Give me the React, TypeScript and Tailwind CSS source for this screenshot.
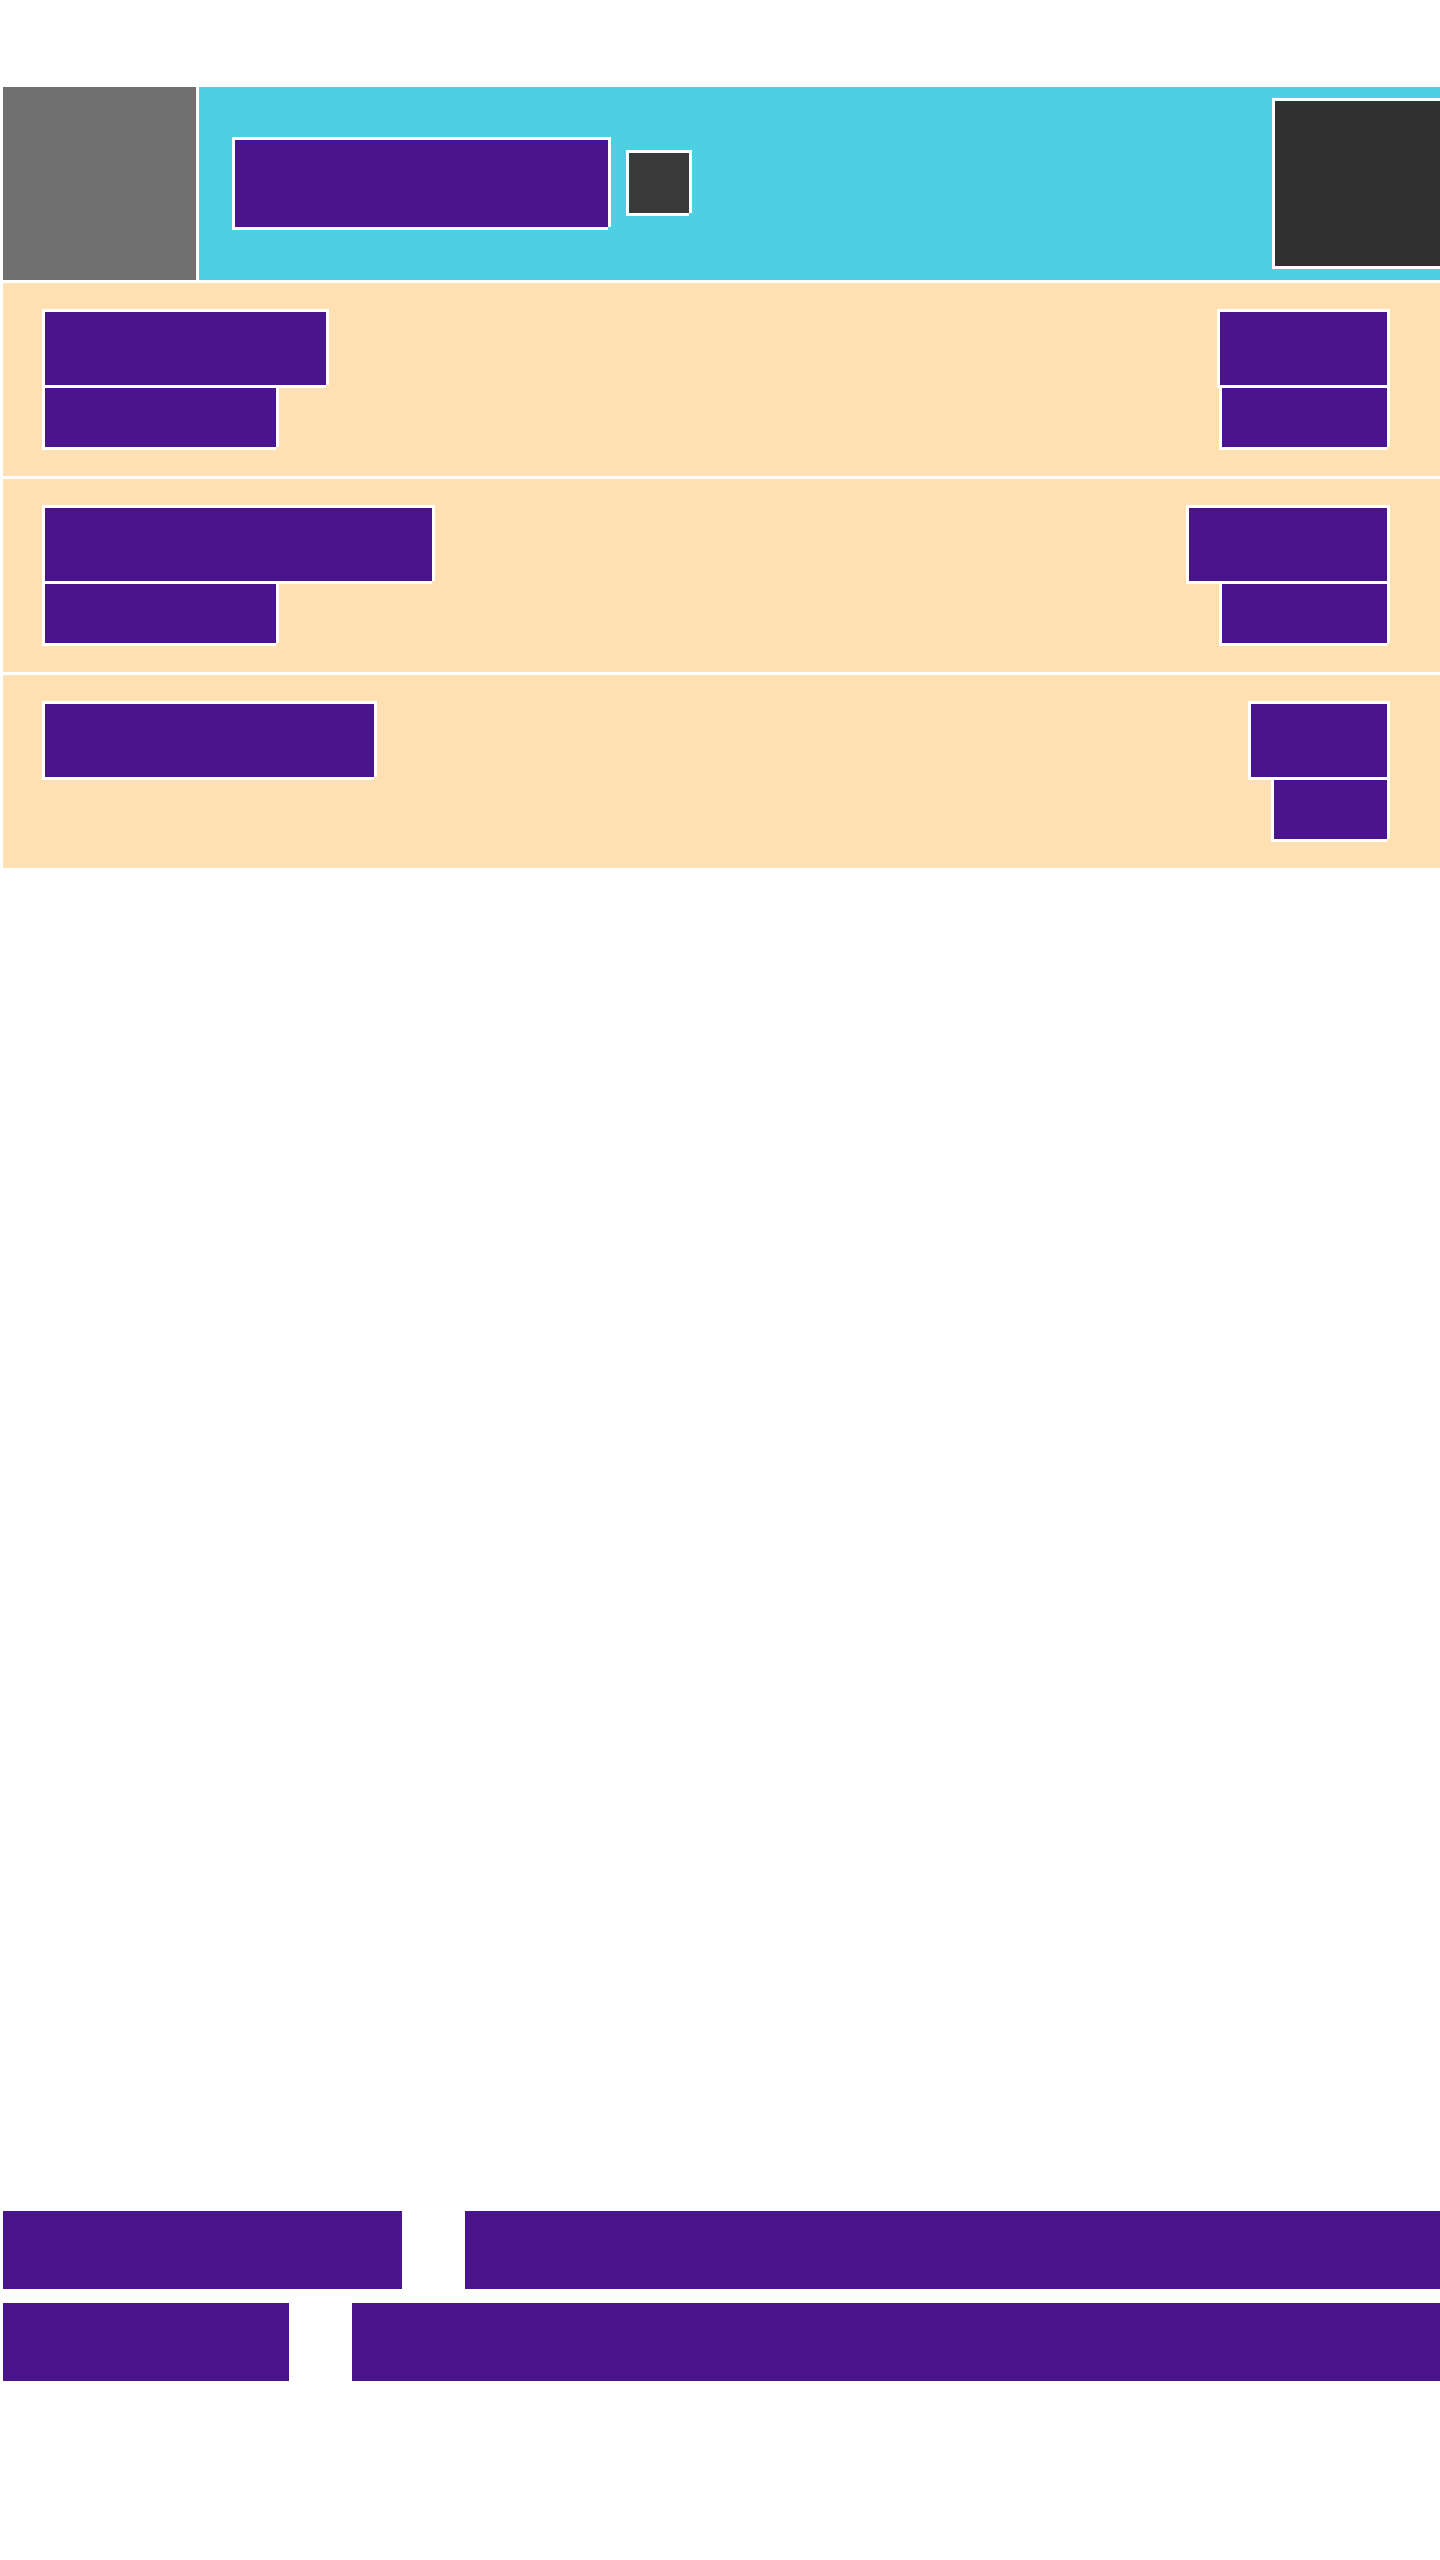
const outline = "shadow-[-3px_-3px_0_#fff,3px_-3px_0_#fff,-3px_3px_0_#fff,3px_0_0_#fff,0_3px_0_#fff]";

function Bar({ w, h, dark }: { w: string; h: string; dark?: string }) {
  return <div className={`${w} ${h} ${dark ?? "bg-[#4a148c]"} ${outline}`} />;
}

const rows = [
  { l1: "w-[281px]", l2: "w-[231px]", r1: "w-[167px]", r2: "w-[165px]" },
  { l1: "w-[387px]", l2: "w-[231px]", r1: "w-[198px]", r2: "w-[165px]" },
  { l1: "w-[329px]", l2: "", r1: "w-[136px]", r2: "w-[113px]" },
];

export default function App() {
  return (
    <div className="w-[1440px] h-[2560px] overflow-hidden bg-white pt-[87px] pl-[3px]">
      <header className="flex h-[193px] gap-[3px]">
        <div className="w-[193px] bg-[#707070]" />
        <div className="flex flex-1 items-center overflow-hidden bg-[#4dd0e1] pl-[36px]">
          <Bar w="w-[373px]" h="h-[87px]" />
          <div className="ml-[21px] mb-px">
            <Bar w="w-[60px]" h="h-[60px]" dark="bg-[#3a3a3a]" />
          </div>
          <div className="ml-auto">
            <Bar w="w-[165px]" h="h-[165px]" dark="bg-[#313131]" />
          </div>
        </div>
      </header>

      <div className="mt-[3px] flex flex-col gap-[3px]">
        {rows.map((r, i) => (
          <div key={i} className="flex h-[193px] justify-between bg-[#ffe0b2] pl-[42px] pr-[53px] pt-[29px]">
            <div className="flex flex-col items-start gap-[3px]">
              <Bar w={r.l1} h="h-[73px]" />
              {r.l2 && <Bar w={r.l2} h="h-[59px]" />}
            </div>
            <div className="flex flex-col items-end gap-[3px]">
              <Bar w={r.r1} h="h-[73px]" />
              <Bar w={r.r2} h="h-[59px]" />
            </div>
          </div>
        ))}
      </div>

      <footer className="mt-[1343px] flex flex-col gap-[14px]">
        <div className="flex h-[78px] gap-[63px]">
          <div className="w-[399px] bg-[#4a148c]" />
          <div className="flex-1 bg-[#4a148c]" />
        </div>
        <div className="flex h-[78px] gap-[63px]">
          <div className="w-[286px] bg-[#4a148c]" />
          <div className="flex-1 bg-[#4a148c]" />
        </div>
      </footer>
    </div>
  );
}
